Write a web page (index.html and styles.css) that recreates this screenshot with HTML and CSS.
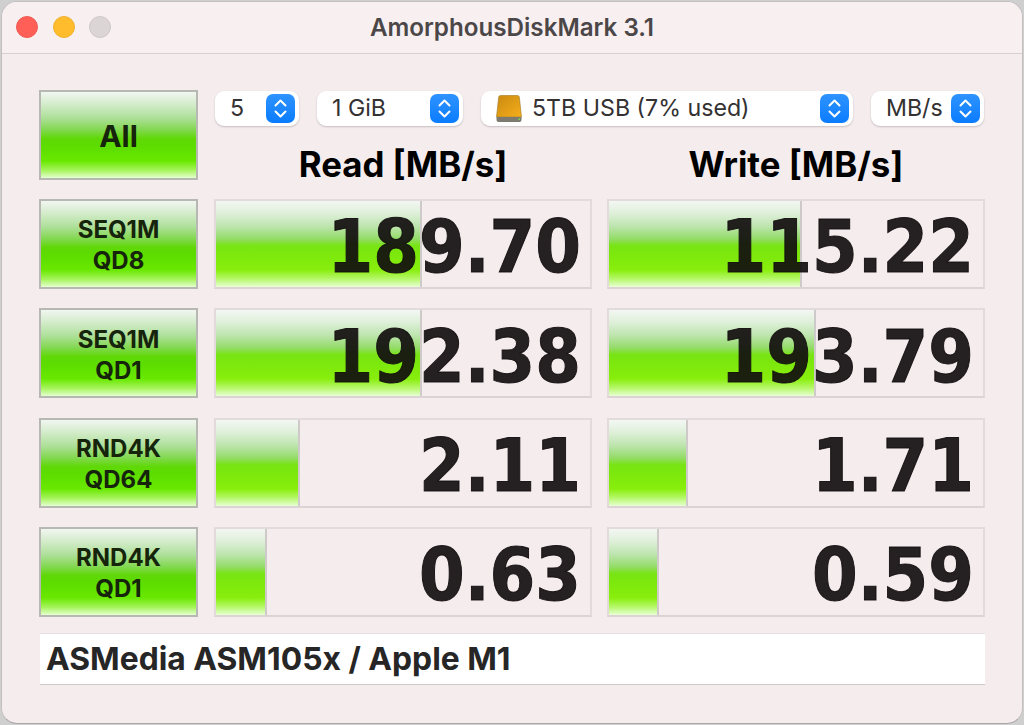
FILE: index.html
```html
<!DOCTYPE html>
<html lang="en">
<head>
    <meta charset="UTF-8">
    <title>AmorphousDiskMark 3.1</title>
    <link rel="stylesheet" href="styles.css">
</head>
<body>
    <div class="window">
        <div class="titlebar">
            <div class="lights">
                <span class="light red"></span>
                <span class="light yellow"></span>
                <span class="light grey"></span>
            </div>
            <div class="title">AmorphousDiskMark 3.1</div>
        </div>
        <div class="content">
            <div class="top-row">
                <button class="run run-all">All</button>
                <div class="top-right">
                    <div class="selects">
                        <div class="select sel-count">
                            <span class="sel-text">5</span>
                            <span class="stepper"><svg width="15" height="23" viewBox="0 0 15 23"><path d="M2.5 8.5 7.5 3.5 12.5 8.5M2.5 14.5 7.5 19.5 12.5 14.5" fill="none" stroke="#fff" stroke-width="2" stroke-linecap="round" stroke-linejoin="round"/></svg></span>
                        </div>
                        <div class="select sel-size">
                            <span class="sel-text">1 GiB</span>
                            <span class="stepper"><svg width="15" height="23" viewBox="0 0 15 23"><path d="M2.5 8.5 7.5 3.5 12.5 8.5M2.5 14.5 7.5 19.5 12.5 14.5" fill="none" stroke="#fff" stroke-width="2" stroke-linecap="round" stroke-linejoin="round"/></svg></span>
                        </div>
                        <div class="select sel-drive">
                            <svg class="drive" width="28" height="29" viewBox="0 0 28 29">
                                <defs>
                                    <linearGradient id="driveFill" x1="0" y1="0" x2="1" y2="1">
                                        <stop offset="0" stop-color="#c98a10"/>
                                        <stop offset="1" stop-color="#f6ae1c"/>
                                    </linearGradient>
                                </defs>
                                <path d="M5.5 1.5H22.5Q24 1.5 24.3 3L26.5 23H1.5L3.7 3Q4 1.5 5.500 1.5Z" fill="url(#driveFill)" stroke="#a9832e" stroke-width=".7"/>
                                <path d="M1.500 23H26.500V26Q26.500 28 24.500 28H3.500Q1.500 28 1.500 26Z" fill="#7d7a70"/>
                                <rect x="23.500" y="24.500" width="1.500" height="1.500" fill="#7fe04a"/>
                            </svg>
                            <span class="sel-text">5TB USB (7% used)</span>
                            <span class="stepper"><svg width="15" height="23" viewBox="0 0 15 23"><path d="M2.5 8.5 7.5 3.5 12.5 8.5M2.5 14.5 7.5 19.5 12.5 14.5" fill="none" stroke="#fff" stroke-width="2" stroke-linecap="round" stroke-linejoin="round"/></svg></span>
                        </div>
                        <div class="select sel-unit">
                            <span class="sel-text">MB/s</span>
                            <span class="stepper"><svg width="15" height="23" viewBox="0 0 15 23"><path d="M2.5 8.5 7.5 3.5 12.5 8.5M2.5 14.5 7.5 19.5 12.5 14.5" fill="none" stroke="#fff" stroke-width="2" stroke-linecap="round" stroke-linejoin="round"/></svg></span>
                        </div>
                    </div>
                    <div class="heads">
                        <div class="head">Read [MB/s]</div>
                        <div class="head">Write [MB/s]</div>
                    </div>
                </div>
            </div>

            <div class="row">
                <button class="run">SEQ1M<br>QD8</button>
                <div class="meter"><div class="bar" style="width: 206px"></div><span class="val">189.70</span></div>
                <div class="meter"><div class="bar" style="width: 193px"></div><span class="val">115.22</span></div>
            </div>
            <div class="row">
                <button class="run">SEQ1M<br>QD1</button>
                <div class="meter"><div class="bar" style="width: 206px"></div><span class="val">192.38</span></div>
                <div class="meter"><div class="bar" style="width: 207px"></div><span class="val">193.79</span></div>
            </div>
            <div class="row">
                <button class="run">RND4K<br>QD64</button>
                <div class="meter"><div class="bar" style="width: 84px"></div><span class="val">2.11</span></div>
                <div class="meter"><div class="bar" style="width: 79px"></div><span class="val">1.71</span></div>
            </div>
            <div class="row">
                <button class="run">RND4K<br>QD1</button>
                <div class="meter"><div class="bar" style="width: 51px"></div><span class="val">0.63</span></div>
                <div class="meter"><div class="bar" style="width: 50px"></div><span class="val">0.59</span></div>
            </div>

            <div class="comment">ASMedia ASM105x / Apple M1</div>
        </div>
    </div>
</body>
</html>
```

FILE: styles.css
```css
html, body {
    margin: 0;
    height: 100%;
}
body {
    background-color: #cfcfcf;
    font-family: Inter, "Liberation Sans", sans-serif;
    overflow: hidden;
}
.window {
    box-sizing: border-box;
    width: 1022px;
    height: 723px;
    margin-left: 1px;
    margin-top: 1px;
    background-color: #f5ecee;
    border: 1px solid #c4c0c1;
    border-bottom-color: #a9a7a8;
    border-radius: 16px;
    overflow: hidden;
}
.titlebar {
    position: relative;
    height: 51px;
    background-color: #f8eff1;
    border-bottom: 1px solid #d6d0d2;
    display: flex;
    align-items: center;
    justify-content: center;
}
.lights {
    position: absolute;
    left: 14px;
    top: 14px;
    display: flex;
    gap: 15px;
}
.light {
    box-sizing: border-box;
    width: 22px;
    height: 22px;
    border-radius: 50%;
}
.red {
    background-color: #ff5f57;
    border: 1px solid #ee5a52;
}
.yellow {
    background-color: #ffbd2e;
    border: 1px solid #efb02c;
}
.grey {
    margin-left: -1px;
    background-color: #dcd5d6;
    border: 1px solid #cdc7c8;
}
.title {
    font-size: 24.200px;
    font-weight: 600;
    color: #4b4748;
}
.content {
    padding: 35.67px 37px 0 37px;
}
.top-row,
.row {
    display: grid;
    grid-template-columns: 160px 1fr;
    grid-template-rows: 90px;
    column-gap: 15px;
    height: 90px;
    margin-bottom: 19.33px;
}
.row {
    grid-template-columns: 160px 378px 378px;
}
.run {
    box-sizing: border-box;
    margin: 0;
    padding: 3px 0 0;
    width: 159px;
    height: 100%;
    border: 2px solid #b8b8b3;
    font-family: inherit;
    font-size: 24px;
    line-height: 31px;
    font-weight: 700;
    color: #15240b;
    background: linear-gradient(to bottom, #f1f6f1 0%, #d4eccb 14%, #aee09a 30%, #82d850 44%, #60d808 54%, #5cdc00 62%, #68e800 80%, #a6f45c 91%, #e4ffd0 100%);
}
.run-all {
    font-size: 30px;
}
.top-right {
    display: flex;
    flex-direction: column;
    width: 771px;
}
.selects {
    display: flex;
    margin-top: 1px;
    margin-left: 1px;
    gap: 18px;
}
.select {
    box-sizing: border-box;
    height: 35px;
    background-color: #fff;
    border-radius: 9px;
    box-shadow: 0 1px 2px rgba(0, 0, 0, 0.2);
    display: flex;
    align-items: center;
    padding-right: 4px;
    font-size: 23.200px;
    color: #343132;
}
.sel-text {
    flex: 1;
    padding-left: 15px;
    white-space: nowrap;
}
.stepper {
    flex: none;
    width: 29px;
    height: 29px;
    border-radius: 7px;
    background: linear-gradient(to bottom, #2f93ff, #0a7cff);
    display: flex;
    align-items: center;
    justify-content: center;
}
.sel-count {
    width: 84px;
}
.sel-size {
    width: 146px;
}
.sel-drive {
    width: 372px;
}
.sel-drive .drive {
    flex: none;
    margin-left: 14px;
}
.sel-drive .sel-text {
    padding-left: 9px;
}
.sel-unit {
    width: 113px;
}
.heads {
    display: grid;
    grid-template-columns: 378px 378px;
    column-gap: 15px;
    margin-top: 19px;
}
.head {
    text-align: center;
    font-size: 34.800px;
    line-height: 38px;
    font-weight: 700;
    color: #000;
}
.meter {
    box-sizing: border-box;
    position: relative;
    height: 90px;
    border: 2px solid #e2dadb;
    border-bottom-color: #dcd3d4;
}
.bar {
    height: 100%;
    box-sizing: border-box;
    border-right: 2px solid #cfcaca;
    background: linear-gradient(to bottom, #f3f7f3 0%, #dff0da 14%, #bce4ac 30%, #94dc68 44%, #78e414 52%, #7ce80c 62%, #88ee0c 80%, #b8f86e 91%, #e8ffd4 100%);
}
.val {
    position: absolute;
    right: 9px;
    top: 6px;
    bottom: 0;
    display: flex;
    align-items: center;
    font-family: "DejaVu Sans Condensed", "DejaVu Sans", sans-serif;
    font-weight: 700;
    font-size: 73px;
    color: rgba(18, 14, 15, 0.92);
    -webkit-text-stroke: 1px rgba(18, 14, 15, 0.92);
}
.comment {
    box-sizing: border-box;
    width: 945px;
    height: 52px;
    margin-top: -3.33px;
    margin-left: 1px;
    padding-left: 6px;
    background-color: #fff;
    border-top: 1px solid #e6dfe1;
    border-bottom: 1px solid #cfc9ca;
    font-size: 31.800px;
    line-height: 50px;
    font-weight: 700;
    color: #262626;
}
```
